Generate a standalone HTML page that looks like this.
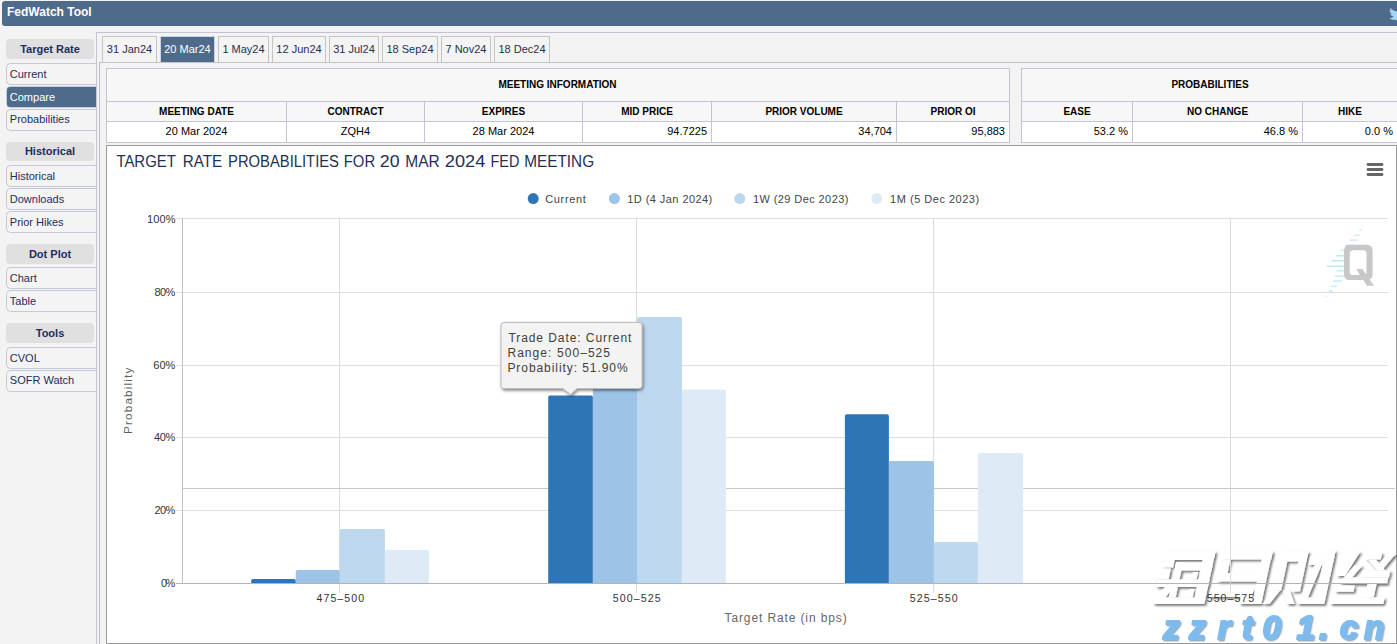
<!DOCTYPE html>
<html><head><meta charset="utf-8"><title>FedWatch Tool</title>
<style>
html,body{margin:0;padding:0;width:1397px;height:644px;overflow:hidden;background:#f3f3f3;}
svg{display:block;font-family:"Liberation Sans", sans-serif;}
</style></head>
<body>
<svg width="1397" height="644" viewBox="0 0 1397 644">
<defs><filter id="wsh" x="-5%" y="-10%" width="115%" height="130%"><feDropShadow dx="1.8" dy="1.8" stdDeviation="0.9" flood-color="#000" flood-opacity="0.55"/></filter><filter id="bsh" x="-10%" y="-10%" width="130%" height="130%"><feDropShadow dx="1.4" dy="1.4" stdDeviation="0.6" flood-color="#3a6a9a" flood-opacity="0.55"/></filter><filter id="sh" x="-10%" y="-15%" width="130%" height="140%"><feDropShadow dx="1" dy="1.6" stdDeviation="1.7" flood-color="#000" flood-opacity="0.5"/></filter></defs>
<rect x="0" y="0" width="1397" height="644" fill="#f3f3f3" />
<rect x="2" y="1" width="1400" height="25" fill="#4e6b8c" rx="3" />
<text x="7" y="15.8" font-size="12" font-weight="bold" fill="#fff" text-anchor="start" >FedWatch Tool</text>
<path d="M1390,7.5 C1392,10 1394,11 1397,11.5 L1397,20 C1394,20 1391.5,19.5 1389.5,18.5 C1391,18 1392.5,17.5 1393.5,16.5 C1392,16 1390.5,15 1390,13.5 C1390.5,13.7 1391.3,13.8 1392,13.7 C1390.5,13 1389.5,11.5 1389.5,10 C1390,10.2 1390.7,10.4 1391.3,10.4 C1390.3,9.6 1389.9,8.6 1390,7.5 Z" fill="#a6d4f5"/>
<rect x="6" y="39" width="88" height="20" fill="#e0e0e0" rx="4" />
<text x="50" y="53" font-size="11" font-weight="bold" fill="#1e2d5c" text-anchor="middle" >Target Rate</text>
<rect x="6.5" y="63.5" width="95" height="21" fill="#f4f4f4" stroke="#c5c8d6" stroke-width="1" rx="4" />
<text x="9.8" y="78" font-size="11" fill="#1e2d5c" text-anchor="start" >Current</text>
<rect x="6.5" y="86.5" width="95" height="21" fill="#f4f4f4" stroke="#c8cad8" stroke-width="1" rx="4" />
<rect x="7" y="87" width="96" height="20" fill="#4e6b8c" rx="3" />
<text x="9.8" y="101" font-size="11" fill="#fff" text-anchor="start" >Compare</text>
<rect x="6.5" y="109.5" width="95" height="21" fill="#f4f4f4" stroke="#c5c8d6" stroke-width="1" rx="4" />
<text x="9.8" y="123" font-size="11" fill="#1e2d5c" text-anchor="start" >Probabilities</text>
<rect x="6" y="142" width="88" height="19" fill="#e0e0e0" rx="4" />
<text x="50" y="155" font-size="11" font-weight="bold" fill="#1e2d5c" text-anchor="middle" >Historical</text>
<rect x="6.5" y="165.5" width="95" height="21" fill="#f4f4f4" stroke="#c5c8d6" stroke-width="1" rx="4" />
<text x="9.8" y="180" font-size="11" fill="#1e2d5c" text-anchor="start" >Historical</text>
<rect x="6.5" y="188.5" width="95" height="21" fill="#f4f4f4" stroke="#c5c8d6" stroke-width="1" rx="4" />
<text x="9.8" y="203" font-size="11" fill="#1e2d5c" text-anchor="start" >Downloads</text>
<rect x="6.5" y="211.5" width="95" height="21" fill="#f4f4f4" stroke="#c5c8d6" stroke-width="1" rx="4" />
<text x="9.8" y="226" font-size="11" fill="#1e2d5c" text-anchor="start" >Prior Hikes</text>
<rect x="6" y="244" width="88" height="20" fill="#e0e0e0" rx="4" />
<text x="50" y="258" font-size="11" font-weight="bold" fill="#1e2d5c" text-anchor="middle" >Dot Plot</text>
<rect x="6.5" y="267.5" width="95" height="21" fill="#f4f4f4" stroke="#c5c8d6" stroke-width="1" rx="4" />
<text x="9.8" y="282" font-size="11" fill="#1e2d5c" text-anchor="start" >Chart</text>
<rect x="6.5" y="290.5" width="95" height="21" fill="#f4f4f4" stroke="#c5c8d6" stroke-width="1" rx="4" />
<text x="9.8" y="305" font-size="11" fill="#1e2d5c" text-anchor="start" >Table</text>
<rect x="6" y="323" width="88" height="20" fill="#e0e0e0" rx="4" />
<text x="50" y="337" font-size="11" font-weight="bold" fill="#1e2d5c" text-anchor="middle" >Tools</text>
<rect x="6.5" y="347.5" width="95" height="21" fill="#f4f4f4" stroke="#c5c8d6" stroke-width="1" rx="4" />
<text x="9.8" y="362" font-size="11" fill="#1e2d5c" text-anchor="start" >CVOL</text>
<rect x="6.5" y="370.5" width="95" height="21" fill="#f4f4f4" stroke="#c5c8d6" stroke-width="1" rx="4" />
<text x="9.8" y="384" font-size="11" fill="#1e2d5c" text-anchor="start" >SOFR Watch</text>
<rect x="97" y="33" width="1400" height="700" fill="#f3f3f3" />
<rect x="96" y="32" width="1400" height="1" fill="#c2c5d0" />
<rect x="96" y="32" width="1" height="700" fill="#c2c5d0" />
<rect x="102.5" y="36.5" width="54" height="26" fill="#f4f4f4" stroke="#c4c4c4" stroke-width="1" />
<text x="129.5" y="53" font-size="11" fill="#1f3050" text-anchor="middle" >31 Jan24</text>
<rect x="160.5" y="36.5" width="54" height="26" fill="#4e6b8c" stroke="#cfd2dc" stroke-width="1" />
<text x="187.5" y="53" font-size="11" fill="#fff" text-anchor="middle" >20 Mar24</text>
<rect x="218.5" y="36.5" width="50" height="26" fill="#f4f4f4" stroke="#c4c4c4" stroke-width="1" />
<text x="243.5" y="53" font-size="11" fill="#1f3050" text-anchor="middle" >1 May24</text>
<rect x="272.5" y="36.5" width="53" height="26" fill="#f4f4f4" stroke="#c4c4c4" stroke-width="1" />
<text x="299.0" y="53" font-size="11" fill="#1f3050" text-anchor="middle" >12 Jun24</text>
<rect x="329.5" y="36.5" width="49" height="26" fill="#f4f4f4" stroke="#c4c4c4" stroke-width="1" />
<text x="354.0" y="53" font-size="11" fill="#1f3050" text-anchor="middle" >31 Jul24</text>
<rect x="382.5" y="36.5" width="55" height="26" fill="#f4f4f4" stroke="#c4c4c4" stroke-width="1" />
<text x="410.0" y="53" font-size="11" fill="#1f3050" text-anchor="middle" >18 Sep24</text>
<rect x="441.5" y="36.5" width="49" height="26" fill="#f4f4f4" stroke="#c4c4c4" stroke-width="1" />
<text x="466.0" y="53" font-size="11" fill="#1f3050" text-anchor="middle" >7 Nov24</text>
<rect x="494.5" y="36.5" width="55" height="26" fill="#f4f4f4" stroke="#c4c4c4" stroke-width="1" />
<text x="522.0" y="53" font-size="11" fill="#1f3050" text-anchor="middle" >18 Dec24</text>
<rect x="99" y="62" width="1400" height="1" fill="#c4c4c4" />
<rect x="99" y="62" width="1" height="700" fill="#bdbdbd" />
<rect x="106" y="68" width="903" height="33" fill="#f7f7f7" />
<rect x="106" y="101" width="903" height="20" fill="#f7f7f7" />
<rect x="106" y="121" width="903" height="21" fill="#ffffff" />
<rect x="106" y="68" width="904" height="1" fill="#c3c5d2" />
<rect x="106" y="101" width="904" height="1" fill="#c3c5d2" />
<rect x="106" y="121" width="904" height="1" fill="#c3c5d2" />
<rect x="106" y="142" width="904" height="1" fill="#c3c5d2" />
<rect x="106" y="68" width="1" height="75" fill="#c3c5d2" />
<rect x="1009" y="68" width="1" height="75" fill="#c3c5d2" />
<rect x="286" y="101" width="1" height="41" fill="#c3c5d2" />
<rect x="424" y="101" width="1" height="41" fill="#c3c5d2" />
<rect x="582" y="101" width="1" height="41" fill="#c3c5d2" />
<rect x="711" y="101" width="1" height="41" fill="#c3c5d2" />
<rect x="896" y="101" width="1" height="41" fill="#c3c5d2" />
<text x="557.5" y="87.8" font-size="10" font-weight="bold" fill="#000" text-anchor="middle" >MEETING INFORMATION</text>
<text x="196.5" y="114.8" font-size="10" font-weight="bold" fill="#000" text-anchor="middle" >MEETING DATE</text>
<text x="196.5" y="134.6" font-size="11" fill="#000" text-anchor="middle" >20 Mar 2024</text>
<text x="355.5" y="114.8" font-size="10" font-weight="bold" fill="#000" text-anchor="middle" >CONTRACT</text>
<text x="355.5" y="134.6" font-size="11" fill="#000" text-anchor="middle" >ZQH4</text>
<text x="503.5" y="114.8" font-size="10" font-weight="bold" fill="#000" text-anchor="middle" >EXPIRES</text>
<text x="503.5" y="134.6" font-size="11" fill="#000" text-anchor="middle" >28 Mar 2024</text>
<text x="647.0" y="114.8" font-size="10" font-weight="bold" fill="#000" text-anchor="middle" >MID PRICE</text>
<text x="707" y="134.6" font-size="11" fill="#000" text-anchor="end" >94.7225</text>
<text x="804.0" y="114.8" font-size="10" font-weight="bold" fill="#000" text-anchor="middle" >PRIOR VOLUME</text>
<text x="892" y="134.6" font-size="11" fill="#000" text-anchor="end" >34,704</text>
<text x="953.0" y="114.8" font-size="10" font-weight="bold" fill="#000" text-anchor="middle" >PRIOR OI</text>
<text x="1005" y="134.6" font-size="11" fill="#000" text-anchor="end" >95,883</text>
<rect x="1021" y="68" width="378" height="33" fill="#f7f7f7" />
<rect x="1021" y="101" width="378" height="20" fill="#f7f7f7" />
<rect x="1021" y="121" width="378" height="21" fill="#ffffff" />
<rect x="1021" y="68" width="379" height="1" fill="#c3c5d2" />
<rect x="1021" y="101" width="379" height="1" fill="#c3c5d2" />
<rect x="1021" y="121" width="379" height="1" fill="#c3c5d2" />
<rect x="1021" y="142" width="379" height="1" fill="#c3c5d2" />
<rect x="1021" y="68" width="1" height="75" fill="#c3c5d2" />
<rect x="1399" y="68" width="1" height="75" fill="#c3c5d2" />
<rect x="1132" y="101" width="1" height="41" fill="#c3c5d2" />
<rect x="1302" y="101" width="1" height="41" fill="#c3c5d2" />
<text x="1210.0" y="87.8" font-size="10" font-weight="bold" fill="#000" text-anchor="middle" >PROBABILITIES</text>
<text x="1077.0" y="114.8" font-size="10" font-weight="bold" fill="#000" text-anchor="middle" >EASE</text>
<text x="1128" y="134.6" font-size="11" fill="#000" text-anchor="end" >53.2 %</text>
<text x="1217.5" y="114.8" font-size="10" font-weight="bold" fill="#000" text-anchor="middle" >NO CHANGE</text>
<text x="1298" y="134.6" font-size="11" fill="#000" text-anchor="end" >46.8 %</text>
<text x="1350" y="114.8" font-size="10" font-weight="bold" fill="#000" text-anchor="middle" >HIKE</text>
<text x="1393" y="134.6" font-size="11" fill="#000" text-anchor="end" >0.0 %</text>
<rect x="106" y="145" width="1291" height="499" fill="#ffffff" />
<rect x="106" y="145" width="1291" height="1" fill="#9a9a9a" />
<rect x="106" y="145" width="1" height="499" fill="#9a9a9a" />
<rect x="106" y="643" width="1291" height="1" fill="#9a9a9a" />
<rect x="1396" y="145" width="1" height="499" fill="#9a9a9a" />
<text x="116.4" y="166.6" font-size="16" fill="#1f2f55" text-anchor="start" textLength="59.42" lengthAdjust="spacingAndGlyphs">TARGET</text>
<text x="182.75" y="166.6" font-size="16" fill="#1f2f55" text-anchor="start" textLength="39.51" lengthAdjust="spacingAndGlyphs">RATE</text>
<text x="228.08" y="166.6" font-size="16" fill="#1f2f55" text-anchor="start" textLength="110.89" lengthAdjust="spacingAndGlyphs">PROBABILITIES</text>
<text x="343.77" y="166.6" font-size="16" fill="#1f2f55" text-anchor="start" textLength="31.35" lengthAdjust="spacingAndGlyphs">FOR</text>
<text x="379.79" y="166.6" font-size="16" fill="#1f2f55" text-anchor="start" textLength="19.69" lengthAdjust="spacingAndGlyphs">20</text>
<text x="405.33" y="166.6" font-size="16" fill="#1f2f55" text-anchor="start" textLength="34.41" lengthAdjust="spacingAndGlyphs">MAR</text>
<text x="444.86" y="166.6" font-size="16" fill="#1f2f55" text-anchor="start" textLength="40.41" lengthAdjust="spacingAndGlyphs">2024</text>
<text x="490.5" y="166.6" font-size="16" fill="#1f2f55" text-anchor="start" textLength="28.8" lengthAdjust="spacingAndGlyphs">FED</text>
<text x="524.24" y="166.6" font-size="16" fill="#1f2f55" text-anchor="start" textLength="69.81" lengthAdjust="spacingAndGlyphs">MEETING</text>
<line x1="1368" y1="164.5" x2="1382" y2="164.5" stroke="#666" stroke-width="2.8" stroke-linecap="round"/>
<line x1="1368" y1="169.5" x2="1382" y2="169.5" stroke="#666" stroke-width="2.8" stroke-linecap="round"/>
<line x1="1368" y1="174.5" x2="1382" y2="174.5" stroke="#666" stroke-width="2.8" stroke-linecap="round"/>
<circle cx="533.2" cy="198.6" r="5.5" fill="#2e75b6"/>
<text x="545.2" y="202.9" font-size="11" fill="#444" textLength="40.59" lengthAdjust="spacing" >Current</text>
<circle cx="614.4" cy="198.6" r="5.5" fill="#9dc3e6"/>
<text x="627.3" y="202.9" font-size="11" fill="#444" textLength="84.99" lengthAdjust="spacing" >1D (4 Jan 2024)</text>
<circle cx="739.8" cy="198.6" r="5.5" fill="#bdd7ee"/>
<text x="753" y="202.9" font-size="11" fill="#444" textLength="95.37" lengthAdjust="spacing" >1W (29 Dec 2023)</text>
<circle cx="876.8" cy="198.6" r="5.5" fill="#deebf7"/>
<text x="890.1" y="202.9" font-size="11" fill="#444" textLength="89.04" lengthAdjust="spacing" >1M (5 Dec 2023)</text>
<rect x="176" y="218" width="1212" height="1" fill="#dfdfe2" />
<rect x="176" y="292" width="1212" height="1" fill="#dfdfe2" />
<rect x="176" y="365" width="1212" height="1" fill="#dfdfe2" />
<rect x="176" y="437" width="1212" height="1" fill="#dfdfe2" />
<rect x="176" y="510" width="1212" height="1" fill="#dfdfe2" />
<rect x="339" y="218" width="1" height="375" fill="#dcdcdc" />
<rect x="636" y="218" width="1" height="375" fill="#dcdcdc" />
<rect x="933" y="218" width="1" height="375" fill="#dcdcdc" />
<rect x="1230" y="218" width="1" height="375" fill="#dcdcdc" />
<rect x="183" y="488" width="1212" height="1" fill="#c8c8c8" />
<rect x="182" y="218" width="1" height="366" fill="#c0c0c0" />
<rect x="176" y="583" width="1212" height="1" fill="#b4b4b4" />
<text x="147.05" y="223" font-size="11" fill="#333" textLength="28.44" lengthAdjust="spacing" >100%</text>
<text x="154.5" y="296" font-size="11" fill="#333" textLength="20.88" lengthAdjust="spacing" >80%</text>
<text x="153.3" y="369" font-size="11" fill="#333" textLength="22.08" lengthAdjust="spacing" >60%</text>
<text x="153.9" y="441" font-size="11" fill="#333" textLength="21.48" lengthAdjust="spacing" >40%</text>
<text x="154.4" y="514" font-size="11" fill="#333" textLength="20.98" lengthAdjust="spacing" >20%</text>
<text x="161.0" y="587" font-size="11" fill="#333" textLength="14.26" lengthAdjust="spacing" >0%</text>
<path d="M251.2,583 L251.2,580.8 Q251.2,579.0 253.0,579.0 L294.0,579.0 Q295.8,579.0 295.8,580.8 L295.8,583 Z" fill="#2e75b6"/>
<path d="M548.2,583 L548.2,397.2 Q548.2,395.4 550.0,395.4 L591.1,395.4 Q592.9,395.4 592.9,397.2 L592.9,583 Z" fill="#2e75b6"/>
<path d="M844.9,583 L844.9,416.0 Q844.9,414.2 846.7,414.2 L887.1,414.2 Q888.9,414.2 888.9,416.0 L888.9,583 Z" fill="#2e75b6"/>
<path d="M295.8,583 L295.8,571.9 Q295.8,570.1 297.6,570.1 L338.0,570.1 Q339.8,570.1 339.8,571.9 L339.8,583 Z" fill="#9dc3e6"/>
<path d="M592.9,583 L592.9,361.8 Q592.9,360.0 594.7,360.0 L635.2,360.0 Q637.0,360.0 637.0,361.8 L637.0,583 Z" fill="#9dc3e6"/>
<path d="M888.9,583 L888.9,462.7 Q888.9,460.9 890.7,460.9 L932.1,460.9 Q933.9,460.9 933.9,462.7 L933.9,583 Z" fill="#9dc3e6"/>
<path d="M339.8,583 L339.8,530.8 Q339.8,529.0 341.6,529.0 L383.1,529.0 Q384.9,529.0 384.9,530.8 L384.9,583 Z" fill="#bdd7ee"/>
<path d="M637.0,583 L637.0,318.9 Q637.0,317.1 638.8,317.1 L680.1,317.1 Q681.9,317.1 681.9,318.9 L681.9,583 Z" fill="#bdd7ee"/>
<path d="M933.9,583 L933.9,543.9 Q933.9,542.1 935.7,542.1 L976.1,542.1 Q977.9,542.1 977.9,543.9 L977.9,583 Z" fill="#bdd7ee"/>
<path d="M384.9,583 L384.9,551.9 Q384.9,550.1 386.7,550.1 L427.2,550.1 Q429.0,550.1 429.0,551.9 L429.0,583 Z" fill="#deebf7"/>
<path d="M681.9,583 L681.9,391.2 Q681.9,389.4 683.7,389.4 L724.1,389.4 Q725.9,389.4 725.9,391.2 L725.9,583 Z" fill="#deebf7"/>
<path d="M977.9,583 L977.9,454.7 Q977.9,452.9 979.7,452.9 L1021.3,452.9 Q1023.1,452.9 1023.1,454.7 L1023.1,583 Z" fill="#deebf7"/>
<text x="316.6" y="601.7" font-size="10.6" fill="#333" textLength="47.45" lengthAdjust="spacing" >475–500</text>
<text x="612.7" y="601.7" font-size="10.6" fill="#333" textLength="47.95" lengthAdjust="spacing" >500–525</text>
<text x="909.7" y="601.7" font-size="10.6" fill="#333" textLength="47.95" lengthAdjust="spacing" >525–550</text>
<text x="724.5" y="621.5" font-size="12" fill="#666" textLength="122.19" lengthAdjust="spacing" >Target Rate (in bps)</text>
<text x="-73.5" y="0" font-size="11.8" fill="#5e5e5e" textLength="66.49" lengthAdjust="spacing" transform="translate(131.7,360.6) rotate(-90)">Probability</text>
<g filter="url(#sh)"><path d="M504,322.5 L639,322.5 Q642,322.5 642,325.5 L642,385.5 Q642,388.5 639,388.5 L577,388.5 L570.5,394.5 L563,388.5 L504,388.5 Q501,388.5 501,385.5 L501,325.5 Q501,322.5 504,322.5 Z" fill="#f3f3f3" stroke="#bdbdbd" stroke-width="1"/></g>
<text x="508.4" y="341.8" font-size="12" fill="#404040" textLength="122.97" lengthAdjust="spacing" >Trade Date: Current</text>
<text x="507.4" y="356.8" font-size="12" fill="#404040" textLength="102.65" lengthAdjust="spacing" >Range: 500–525</text>
<text x="507.4" y="371.7" font-size="12" fill="#404040" textLength="120.21" lengthAdjust="spacing" >Probability: 51.90%</text>
<g fill="#bfe7f8"><polygon points="1364.0,224.5 1364.4,224.5 1363.2,225.9 1362.8,225.9"/><polygon points="1359.9,229.2 1362.2,229.2 1361.0,230.6 1358.7,230.6"/><polygon points="1355.3,234.4 1360.0,234.4 1358.8,235.8 1354.1,235.8"/><polygon points="1350.6,239.4 1357.8,239.4 1356.6,240.8 1349.4,240.8"/><polygon points="1346.0,244.7 1355.0,244.7 1353.8,246.1 1344.8,246.1"/><polygon points="1341.1,249.7 1353.0,249.7 1351.8,251.1 1339.9,251.1"/><polygon points="1336.7,255.0 1351.0,255.0 1349.8,256.4 1335.5,256.4"/><polygon points="1332.1,260.0 1349.0,260.0 1347.8,261.4 1330.9,261.4"/><polygon points="1327.4,265.5 1347.0,265.5 1345.8,266.9 1326.2,266.9"/><polygon points="1337.3,270.2 1345.0,270.2 1343.8,271.6 1336.1,271.6"/><polygon points="1335.5,275.4 1345.4,275.4 1344.2,276.8 1334.3,276.8"/><polygon points="1333.6,280.3 1342.3,280.3 1341.1,281.7 1332.4,281.7"/><polygon points="1331.4,285.4 1337.4,285.4 1336.2,286.8 1330.2,286.8"/><polygon points="1329.6,290.3 1333.0,290.3 1331.8,291.7 1328.4,291.7"/><polygon points="1327.2,295.6 1328.0,295.6 1326.8,297.0 1326.0,297.0"/></g>
<path d="M1350,244.8 L1366.6,244.8 Q1372.6,244.8 1372.6,250.8 L1372.6,274 Q1372.6,280 1366.6,280 L1350,280 Q1344,280 1344,274 L1344,250.8 Q1344,244.8 1350,244.8 Z M1352.7,250.2 Q1349.7,250.2 1349.7,253.2 L1349.7,272 Q1349.7,275 1352.7,275 L1363.5,275 Q1366.5,275 1366.5,272 L1366.5,253.2 Q1366.5,250.2 1363.5,250.2 Z" fill="#c8c8c8" fill-rule="evenodd"/>
<path d="M1356.2,269 L1362.3,269 L1374,285.8 L1367,285.8 Z" fill="#c8c8c8"/>
<g fill="#ffffff" filter="url(#wsh)"><g transform="translate(1149,605.5) skewX(-12)"><rect x="4" y="-54" width="51" height="8.6"/><rect x="5" y="-54" width="11" height="16"/><rect x="1" y="-37" width="13" height="11"/><rect x="18" y="-43" width="37" height="8"/><rect x="18" y="-43" width="7" height="35"/><rect x="44" y="-54" width="11" height="52.5"/><rect x="3" y="-26" width="52" height="7.5"/><rect x="3.6" y="-8" width="51" height="6.5"/><rect x="37" y="-33.5" width="5" height="7.5"/><rect x="37" y="-16.5" width="5" height="8.5"/><polygon points="3.6,-1.5 12,-1.5 20,-18.5 12,-18.5"/></g><g transform="translate(1208,605.5) skewX(-12)"><rect x="4.4" y="-54.5" width="49" height="8.5"/><rect x="5.7" y="-46" width="7" height="13.5"/><rect x="4" y="-32.5" width="44" height="8.5"/><rect x="44" y="-54.5" width="9" height="53"/><rect x="-0.8" y="-16.5" width="43" height="8"/><rect x="31" y="-8.5" width="20" height="7"/></g><g transform="translate(1266,605.5) skewX(-12)"><rect x="4" y="-54" width="8" height="39"/><rect x="4" y="-54" width="27" height="10"/><rect x="23" y="-54" width="8" height="40"/><rect x="34" y="-49" width="24" height="8.5"/><rect x="48" y="-55" width="10" height="53.5"/><rect x="31" y="-8" width="25" height="6.5"/><polygon points="4,-15 11,-15 3.2,-1.5 -4,-1.5"/><polygon points="14,-15 20.5,-15 28.3,-1.5 21,-1.5"/><polygon points="40,-40.5 47,-40.5 39.3,-3.5 32,-3.5"/></g><g transform="translate(1328,605.5) skewX(-12)"><rect x="28" y="-53" width="15" height="7"/><rect x="27" y="-35" width="28" height="7"/><rect x="13.4" y="-28" width="41" height="6.5"/><rect x="4" y="-20" width="18.6" height="6.3"/><rect x="35" y="-21.5" width="9" height="13.5"/><rect x="1.7" y="-8" width="53.3" height="6.5"/><polygon points="13,-54 21,-54 10.7,-29.5 2,-29.5"/><polygon points="18,-40 26,-40 14.3,-22 6,-22"/><polygon points="49,-52 57,-52 47.5,-37 39.5,-37"/><polygon points="30,-46 38,-46 50,-35 42,-35"/></g></g>
<rect x="1230" y="540" width="1" height="53" fill="#dcdcdc" />
<rect x="1150" y="583" width="238" height="1" fill="#b4b4b4" />
<text x="1206.8" y="601.7" font-size="10.6" fill="#333" textLength="47.35" lengthAdjust="spacing" >550–575</text>
<g font-size="33" font-weight="bold" font-style="italic" fill="#7dbbee" stroke="#7dbbee" stroke-width="1.8" stroke-linejoin="round" filter="url(#bsh)"><text x="1163.0" y="638.6">z</text><text x="1189.0" y="638.6">z</text><text x="1217.6" y="638.6">r</text><text x="1241.8" y="638.6">t</text><text x="1262.6" y="638.6">0</text><text x="1296.4" y="638.6">1</text><text x="1318.9" y="638.6">.</text><text x="1339.7" y="638.6">c</text><text x="1363.9" y="638.6">n</text></g>
</svg>
</body></html>
